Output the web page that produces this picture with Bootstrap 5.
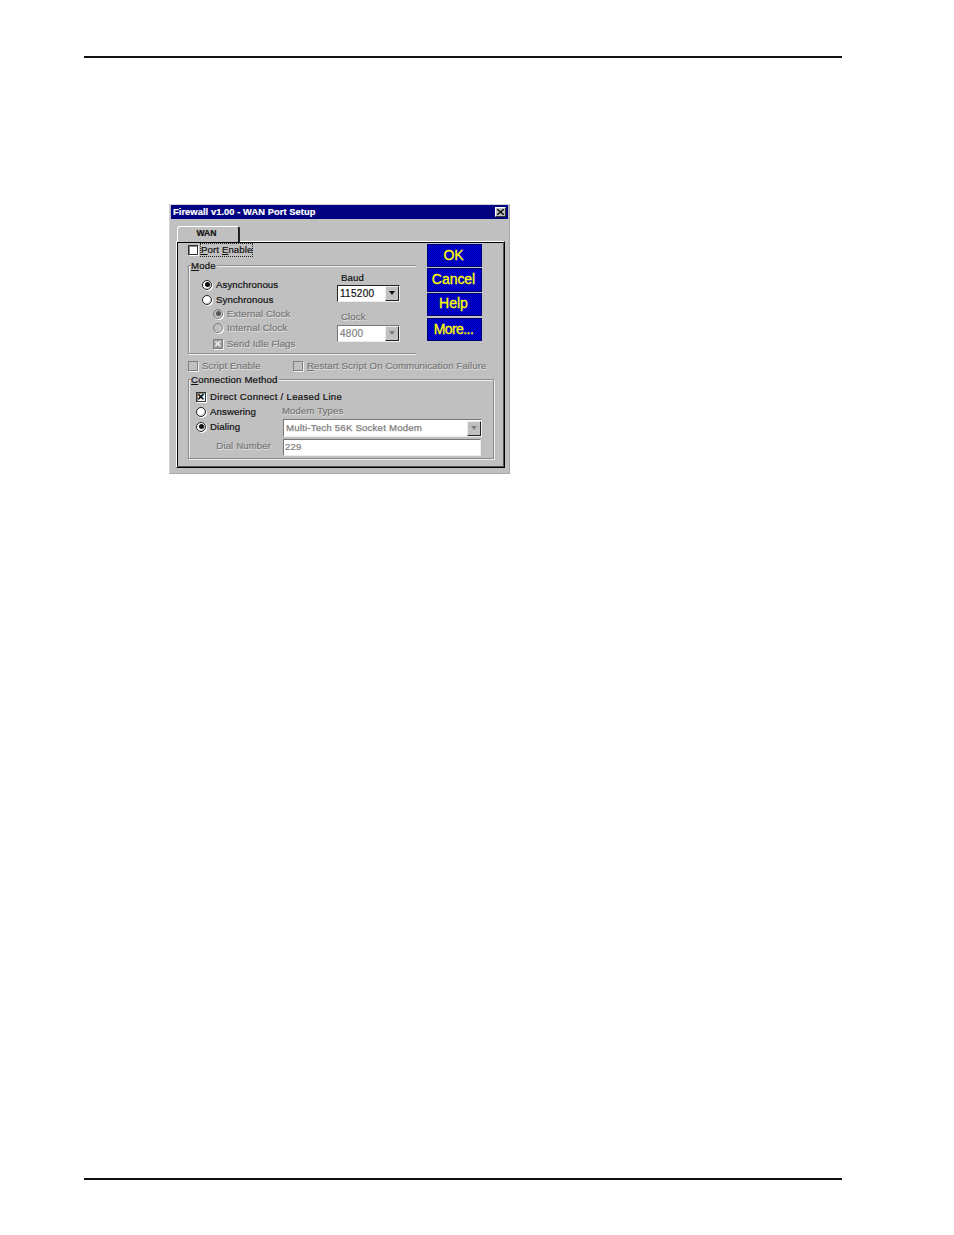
<!DOCTYPE html>
<html lang="en"><head><meta charset="utf-8"><title>WAN Port Setup</title>
<link href="https://cdn.jsdelivr.net/npm/bootstrap@5.3.0/dist/css/bootstrap.min.css" rel="stylesheet">
<style>
html,body{background:#fff;margin:0}
.pg{width:954px;height:1235px;padding-top:56px;font-family:"Liberation Sans",Arial,sans-serif;font-size:9.6px;line-height:12px;color:#111;-webkit-text-stroke:.2px currentColor}
.rule{height:2px;background:#111;width:758px;margin-left:84px}
.dlg{width:341px;height:270px;margin:146px 0 704px 169px;background:#c0c0c0;border:1px solid #d4d4d4;border-right-color:#a8a8a8;border-bottom-color:#a8a8a8;padding:0 1px}
.ttl{height:14px;background:#000080;color:#fff;padding:0 2px;font-size:9.3px;letter-spacing:.08px}
.xbtn{width:11px;height:10px;background:#c0c0c0;border:1px solid;border-color:#fff #333 #333 #fff}
.tabx{width:63px;height:16px;margin:7px 0 -1px 6px;background:#c0c0c0;border:1px solid #fff;border-right:2px solid #222;border-bottom:0;border-radius:3px 3px 0 0;padding-right:3px;font-size:8.6px;font-weight:700;text-align:center;position:relative;z-index:1}
.pnl{width:329px;height:227px;margin-left:5px;border:1px solid;border-color:#fff #000 #000 #fff;box-shadow:inset -1px -1px 0 #555,inset 1px 1px 0 #000;padding:2px 0 0 11px}
.gry{color:#767676;text-shadow:.6px .6px 0 #e8e8e8}
.fld{position:relative;width:228px;height:89px;margin-top:9px;border:solid #8c8c8c;border-width:1px 0 1px 1px;box-shadow:0 1px 0 #eee,inset 1px 1px 0 #eee;padding:11px 0 0 13px}
.lgd{position:absolute;left:2px;top:-6px;background:#c0c0c0;padding-right:1px;white-space:nowrap;letter-spacing:.2px}
.fld2{position:relative;width:306px;height:80px;margin-top:7px;border:1px solid #8c8c8c;box-shadow:inset 1px 1px 0 #eee,1px 1px 0 #eee;padding:9px 0 0 7px}
.ro{height:15px}
.ro13{height:13px}
.ro17{height:17px}
.lvl2{padding-left:11px}
.rad{flex:none;width:10px;height:10px;border-radius:50%;background:#fff;border:1px solid #222;box-shadow:inset -1px -1px 0 #ccc,1px 1px 0 #fff;position:relative}
.rad.on::after{content:"";position:absolute;left:1.5px;top:1.5px;width:5px;height:5px;border-radius:50%;background:#111}
.rad.dis{background:#c0c0c0;border-color:#777}
.rad.dis.on::after{background:#555}
.cbx{flex:none;width:10px;height:10px;background:#fff;border:1px solid #333;box-shadow:inset 1px 1px 0 #888,1px 1px 0 #fff;position:relative;font-size:9px;line-height:8px;text-align:center;font-weight:700}
.cbx.dis{background:#c0c0c0;border-color:#808080;box-shadow:1px 1px 0 #eee}
.cbx.mix{background:#9a9a9a;color:#e8e8e8;text-shadow:none}
.port{height:12px;gap:3px}
.focusd{outline:1px dotted #222}
.sel{height:17px;background:#fff;border:1px solid;border-color:#222 #eee #eee #222;padding-left:2px;font-size:10px;letter-spacing:.3px}
.sel.dis{color:#808080;border-color:#777 #eee #eee #777}
.sel.wide{width:199px;height:18px;font-size:9.6px;padding-left:2px;letter-spacing:.22px}
.sel.txt{height:17px;font-size:9.6px;letter-spacing:.2px;padding:0 0 2px 1px}
.arw{flex:none;width:14px;height:15px;background:#c0c0c0;border:1px solid;border-color:#eee #222 #222 #eee;position:relative}
.arw::after{content:"";position:absolute;left:3px;top:4px;border:3.5px solid transparent;border-top:4px solid #111;border-bottom:0}
.sel.dis .arw::after{border-top-color:#808080}
.btns{margin-left:11px}
.blu{width:55px;height:23px;margin-bottom:1px;padding-right:2px;background:#0000c0;background-image:conic-gradient(#0000a0 25%,#0000e4 0 50%,#0000a0 0 75%,#0000e4 0);background-size:2px 2px;border:1px solid #000070;color:#ff0;font-size:14px;line-height:21px;text-align:center;-webkit-text-stroke:.3px #ff0;white-space:nowrap}
.blu.tall{height:24px}
.blu.gapb{margin-bottom:2px;line-height:19px}
.ctx{letter-spacing:-.05px}
.mtx{letter-spacing:-.6px}
.sp{letter-spacing:.12px}
.colL{width:135px}
.colR{width:63px;margin-top:-6px}
.lblB{height:14px;padding-top:1px}
.lblC{height:14px;margin-top:9px}
.srow{height:12px;margin-top:6px}
.scr{width:91px}
.dcl{letter-spacing:.3px}
.ans{width:68px}
.mdm{margin-top:-2px}
.crow{height:18px}
.dia{width:87px;height:15px}
.nrow{height:17px;margin-top:2px}
.dnm{width:75px;margin-top:-3px}
.inp{margin-left:12px;width:198px}
</style></head><body>
<div class="pg">
 <div class="rule"></div>
 <div class="dlg">
  <div class="ttl d-flex align-items-center justify-content-between fw-bold"><span>Firewall v1.00 - WAN Port Setup</span>
   <span class="xbtn d-flex align-items-center justify-content-center"><svg width="7" height="6" viewBox="0 0 7 6"><path d="M0 0l7 6M7 0l-7 6" stroke="#111" stroke-width="1.4"/></svg></span></div>
  <div class="tabx">WAN</div>
  <div class="pnl">
   <div class="d-flex">
    <div>
     <div class="d-flex align-items-center port sp"><span class="cbx"></span><span class="focusd"><u>P</u>ort <u>E</u>nable</span></div>
     <div class="fld sp">
      <span class="lgd"><u>M</u>ode</span>
      <div class="d-flex">
       <div class="colL">
        <div class="ro d-flex align-items-center gap-1"><span class="rad on"></span><span>Asynchronous</span></div>
        <div class="ro d-flex align-items-center gap-1"><span class="rad"></span><span>Synchronous</span></div>
        <div class="ro13 d-flex align-items-center gap-1 gry lvl2"><span class="rad dis on"></span><span>External Clock</span></div>
        <div class="ro d-flex align-items-center gap-1 gry lvl2"><span class="rad dis"></span><span>Internal Clock</span></div>
        <div class="ro17 d-flex align-items-center gap-1 gry lvl2"><span class="cbx dis mix">✕</span><span>Send Idle Flags</span></div>
       </div>
       <div class="colR">
        <div class="ps-1 lblB">Baud</div>
        <div class="sel d-flex align-items-center justify-content-between"><span>115200</span><span class="arw"></span></div>
        <div class="ps-1 gry lblC">Clock</div>
        <div class="sel dis d-flex align-items-center justify-content-between"><span>4800</span><span class="arw"></span></div>
       </div>
      </div>
     </div>
    </div>
    <div class="d-flex flex-column btns">
     <div class="blu">OK</div><div class="blu tall"><span class="ctx">Cancel</span></div><div class="blu gapb">Help</div><div class="blu"><span class="mtx">More...</span></div>
    </div>
   </div>
   <div class="d-flex align-items-center sp gry srow">
    <span class="cbx dis me-1"></span><span class="scr">Script Enable</span>
    <span class="cbx dis me-1"></span><span><u>R</u>estart Script On Communication Failure</span>
   </div>
   <div class="fld2 sp">
    <span class="lgd"><u>C</u>onnection Method</span>
    <div class="ro d-flex align-items-center gap-1"><span class="cbx">✕</span><span class="dcl">Direct Connect / Leased Line</span></div>
    <div class="ro d-flex align-items-center gap-1"><span class="rad"></span><span class="ans">Answering</span><span class="gry mdm">Modem Types</span></div>
    <div class="d-flex crow">
     <div class="d-flex align-items-center gap-1 dia"><span class="rad on"></span><span>Dialing</span></div>
     <div class="sel wide dis d-flex align-items-center justify-content-between gry"><span>Multi-Tech 56K Socket Modem</span><span class="arw"></span></div>
    </div>
    <div class="d-flex align-items-center nrow">
     <div class="gry text-end dnm">Dial Number</div>
     <div class="sel txt dis d-flex align-items-center inp">229</div>
    </div>
   </div>
  </div>
 </div>
 <div class="rule"></div>
</div>
<script src="https://cdn.jsdelivr.net/npm/bootstrap@5.3.0/dist/js/bootstrap.bundle.min.js"></script>
</body></html>
